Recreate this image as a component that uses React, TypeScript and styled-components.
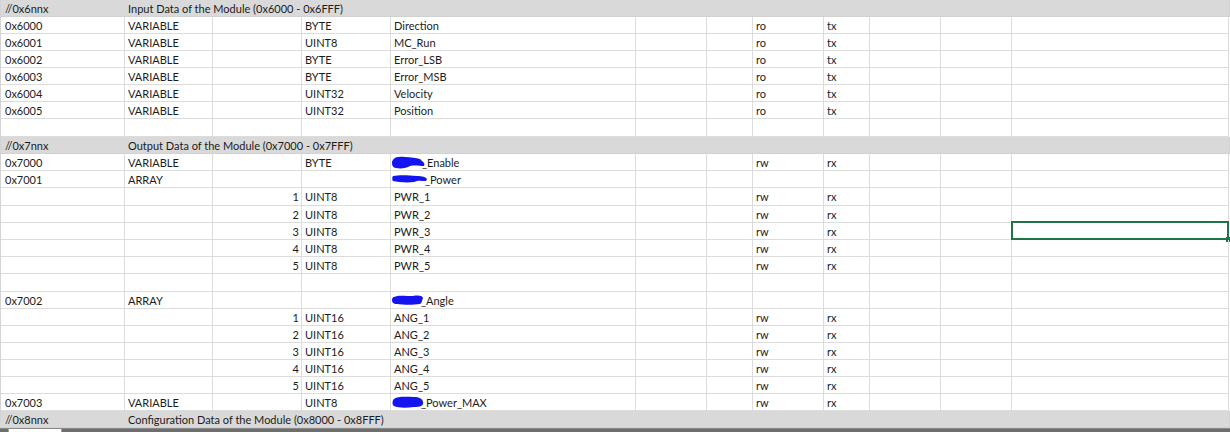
import React from "react";
import styled, { createGlobalStyle } from "styled-components";

const GlobalStyle = createGlobalStyle`
  html, body { margin: 0; padding: 0; background: #ffffff; }
  body { font-family: Lato, "Open Sans", sans-serif; }
`;

const COLS = [124, 88, 89, 89, 245, 71, 46, 71, 46, 71, 71, 217];

const Page = styled.div`
  width: 1230px;
  height: 432px;
  overflow: hidden;
  display: flex;
  flex-direction: column;
  background: #fff;
`;

const Sheet = styled.div`
  width: 1229px;
  border-left: 1px solid #d4d4d4;
  display: flex;
  flex-direction: column;
`;

const Row = styled.div<{ $h: number }>`
  display: grid;
  grid-template-columns: ${COLS.map((c) => c + "px").join(" ")};
  height: ${(p) => p.$h}px;
`;

const HeaderRow = styled.div<{ $h: number }>`
  display: grid;
  grid-template-columns: 124px 1fr;
  height: ${(p) => p.$h}px;
  background: #d9d9d9;
  border-bottom: 1px solid #d2d2d2;
  border-right: 1px solid #d2d2d2;
  box-sizing: border-box;
`;

const Cell = styled.div<{ $align?: "left" | "right"; $first?: boolean }>`
  position: relative;
  box-sizing: border-box;
  border-right: 1px solid #dcdcdc;
  border-bottom: 1px solid #dcdcdc;
  padding: 0 ${(p) => (p.$align === "right" ? "2px" : "3px")} 0
    ${(p) => (p.$first ? "4px" : "3px")};
  display: flex;
  align-items: center;
  justify-content: ${(p) => (p.$align === "right" ? "flex-end" : "flex-start")};
  font-size: 11px;
  color: #1c1c1c;
  white-space: nowrap;
  overflow: visible;
`;

const HeaderText = styled.div<{ $first?: boolean }>`
  padding-left: ${(p) => (p.$first ? "4px" : "3px")};
  display: flex;
  align-items: center;
  font-size: 11px;
  color: #1c1c1c;
  white-space: nowrap;
`;

const Selected = styled.div`
  position: absolute;
  left: -1px;
  top: -2px;
  right: -1px;
  bottom: -1px;
  border: 2px solid #217346;
  pointer-events: none;
  &::after {
    content: "";
    position: absolute;
    right: -4px;
    bottom: -4px;
    width: 5px;
    height: 5px;
    background: #217346;
  }
`;

const Scribble = styled.svg`
  display: block;
  flex: none;
  margin-left: -2px;
`;

const NameText = styled.span`
  margin-left: -3px;
`;

const TabBar = styled.div`
  position: relative;
  height: 4px;
  background: #6e6e6e;
  border-top: 1px solid #8a8a8a;
  box-sizing: border-box;
`;

const Tab = styled.div`
  margin-left: 8px;
  width: 54px;
  height: 100%;
  background: #ffffff;
  border-left: 1px solid #a0a0a0;
  border-right: 1px solid #a0a0a0;
  box-sizing: border-box;
`;

const BLOBS: Record<string, { w: number; h: number; d: string }> = {
  a: {
    w: 33,
    h: 13,
    d: "M1 4 C2 1 7 0 13 1 C19 1 24 2 28 3 L30 5 C32 6 33 8 32 10 C28 10 23 9 18 10 C15 12 9 13 4 12 C1 12 0 9 0 7 C0 6 0 5 1 4 Z",
  },
  b: {
    w: 36,
    h: 8,
    d: "M1 1 C6 0 15 0 25 1 C30 1 34 2 35 4 L34 6 C30 6 26 5 22 7 C14 8 6 7 1 6 C0 5 0 2 1 1 Z",
  },
  c: {
    w: 32,
    h: 10,
    d: "M2 2 C6 0 13 1 21 1 C27 0 31 1 31 3 C30 5 30 8 28 9 C21 10 12 10 5 9 C1 9 0 7 0 5 C0 3 1 2 2 2 Z",
  },
  d: {
    w: 32,
    h: 12,
    d: "M2 3 C6 0 14 1 22 1 C27 1 31 3 31 6 C32 10 28 11 22 11 C14 12 6 12 2 10 C0 9 0 5 2 3 Z",
  },
};

type Named = { blob: keyof typeof BLOBS; text: string };
type CellVal = string | Named;

type RowDef =
  | { kind: "header"; h: number; code: string; title: string }
  | { kind: "data"; h: number; cells: CellVal[]; selected?: number };

const data = (
  h: number,
  a: string,
  b: string,
  idx: string,
  type: string,
  name: CellVal,
  acc: string,
  dir: string,
  selected?: number
): RowDef => ({
  kind: "data",
  h,
  cells: [a, b, idx, type, name, "", "", acc, dir, "", "", ""],
  selected,
});

const ROWS: RowDef[] = [
  { kind: "header", h: 17, code: "//0x6nnx", title: "Input Data of the Module (0x6000 - 0x6FFF)" },
  data(17, "0x6000", "VARIABLE", "", "BYTE", "Direction", "ro", "tx"),
  data(17, "0x6001", "VARIABLE", "", "UINT8", "MC_Run", "ro", "tx"),
  data(17, "0x6002", "VARIABLE", "", "BYTE", "Error_LSB", "ro", "tx"),
  data(17, "0x6003", "VARIABLE", "", "BYTE", "Error_MSB", "ro", "tx"),
  data(17, "0x6004", "VARIABLE", "", "UINT32", "Velocity", "ro", "tx"),
  data(17, "0x6005", "VARIABLE", "", "UINT32", "Position", "ro", "tx"),
  data(18, "", "", "", "", "", "", ""),
  { kind: "header", h: 17, code: "//0x7nnx", title: "Output Data of the Module (0x7000 - 0x7FFF)" },
  data(17, "0x7000", "VARIABLE", "", "BYTE", { blob: "a", text: "_Enable" }, "rw", "rx"),
  data(17, "0x7001", "ARRAY", "", "", { blob: "b", text: "_Power" }, "", ""),
  data(18, "", "", "1", "UINT8", "PWR_1", "rw", "rx"),
  data(17, "", "", "2", "UINT8", "PWR_2", "rw", "rx"),
  data(17, "", "", "3", "UINT8", "PWR_3", "rw", "rx", 11),
  data(17, "", "", "4", "UINT8", "PWR_4", "rw", "rx"),
  data(17, "", "", "5", "UINT8", "PWR_5", "rw", "rx"),
  data(18, "", "", "", "", "", "", ""),
  data(17, "0x7002", "ARRAY", "", "", { blob: "c", text: "_Angle" }, "", ""),
  data(17, "", "", "1", "UINT16", "ANG_1", "rw", "rx"),
  data(17, "", "", "2", "UINT16", "ANG_2", "rw", "rx"),
  data(17, "", "", "3", "UINT16", "ANG_3", "rw", "rx"),
  data(17, "", "", "4", "UINT16", "ANG_4", "rw", "rx"),
  data(17, "", "", "5", "UINT16", "ANG_5", "rw", "rx"),
  data(17, "0x7003", "VARIABLE", "", "UINT8", { blob: "d", text: "_Power_MAX" }, "rw", "rx"),
  { kind: "header", h: 17, code: "//0x8nnx", title: "Configuration Data of the Module (0x8000 - 0x8FFF)" },
];

function renderValue(v: CellVal) {
  if (typeof v === "string") return v;
  const b = BLOBS[v.blob];
  return (
    <>
      <Scribble width={b.w} height={b.h} viewBox={`0 0 ${b.w} ${b.h}`}>
        <path d={b.d} fill="#1414f0" />
      </Scribble>
      <NameText>{v.text}</NameText>
    </>
  );
}

export default function App() {
  return (
    <Page>
      <GlobalStyle />
      <Sheet>
        {ROWS.map((r, i) =>
          r.kind === "header" ? (
            <HeaderRow key={i} $h={r.h}>
              <HeaderText $first>{r.code}</HeaderText>
              <HeaderText>{r.title}</HeaderText>
            </HeaderRow>
          ) : (
            <Row key={i} $h={r.h}>
              {r.cells.map((c, j) => (
                <Cell key={j} $first={j === 0} $align={j === 2 ? "right" : "left"}>
                  {renderValue(c)}
                  {r.selected === j && <Selected />}
                </Cell>
              ))}
            </Row>
          )
        )}
      </Sheet>
      <TabBar>
        <Tab />
      </TabBar>
    </Page>
  );
}
